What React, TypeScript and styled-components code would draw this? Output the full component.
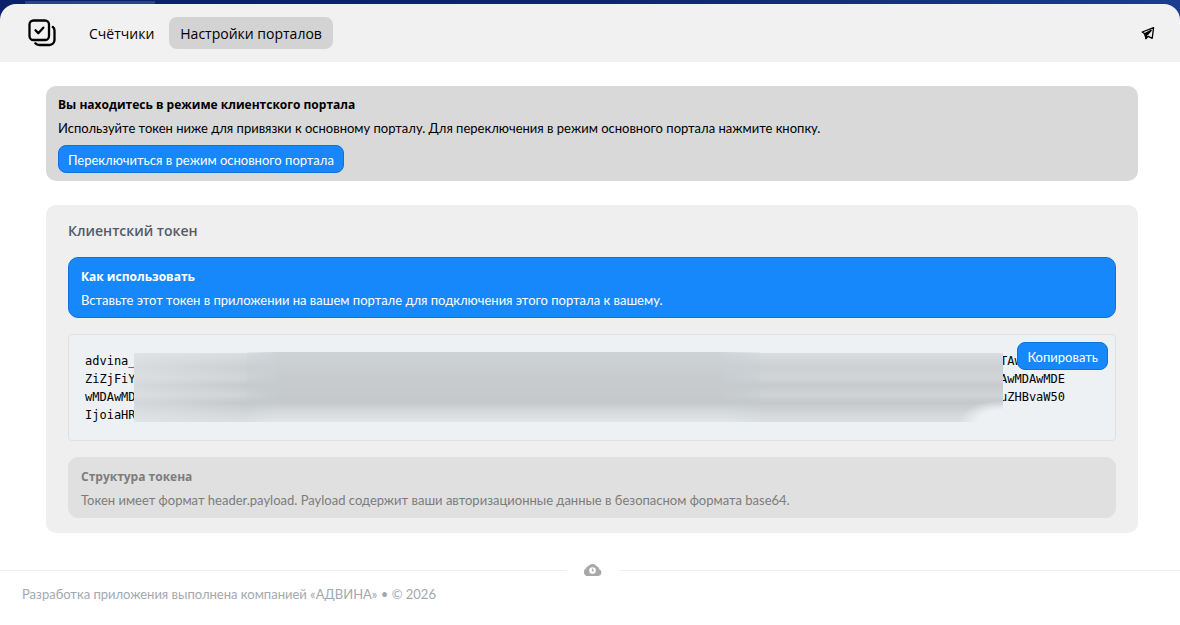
import React from "react";
import styled, { createGlobalStyle } from "styled-components";

const GlobalStyle = createGlobalStyle`
  * { box-sizing: border-box; }
  body {
    margin: 0;
    background: #fff;
    color: #000;
    font: 13px/20px Lato, "Open Sans", sans-serif;
  }
  h1, h2, p { margin: 0; font-size: inherit; }
`;

const TopStrip = styled.div`
  background:
    linear-gradient(#2c4385, #2c4385) 25px 1px / 130px 3px no-repeat,
    linear-gradient(90deg, #0b1f6c, #0d2470 50%, #1b3c8f);
  padding-top: 4px;
`;

const Header = styled.header`
  display: flex;
  align-items: center;
  height: 58px;
  padding: 0 25px 0 28px;
  border-radius: 16px 16px 0 0;
  background: #f1f1f1;
`;

const Nav = styled.nav`
  display: flex;
  gap: 4px;
  margin-left: 22px;
`;

const NavLink = styled.a<{ $active?: boolean }>`
  padding: 7px 11px 5px;
  border-radius: 8px;
  background: ${(p) => (p.$active ? "#d3d3d3" : "transparent")};
  color: #000;
  font-family: "Open Sans", sans-serif;
  font-size: 14px;
  line-height: 20px;
  text-decoration: none;
`;

const IconLink = styled.a`
  display: flex;
  margin-left: auto;
  color: #000;
`;

const Main = styled.main`
  display: flex;
  flex-direction: column;
  gap: 24px;
  padding: 24px 42px 0 46px;
`;

const Notice = styled.section`
  display: flex;
  flex-direction: column;
  align-items: flex-start;
  padding: 8px 12px;
  border-radius: 10px;
  background: #d9d9d9;
`;

const Heading = styled.h2`
  margin-bottom: 2px;
  font: 700 12px/22px "Open Sans", sans-serif;
`;

const Button = styled.button`
  height: 28px;
  padding: 2px 9px 0;
  border: 1px solid #1470d6;
  border-radius: 8px;
  background: #1787fc;
  color: #fff;
  font: 13px/20px Lato, "Open Sans", sans-serif;
  cursor: pointer;
`;

const SwitchButton = styled(Button)`
  margin-top: 7px;
`;

const Card = styled.section`
  display: flex;
  flex-direction: column;
  gap: 16px;
  padding: 16px 22px 15px;
  border-radius: 10px;
  background: #efefef;
`;

const CardTitle = styled.h1`
  color: #525c69;
  font: 600 14px/20px "Open Sans", sans-serif;
`;

const Alert = styled.div<{ $primary?: boolean }>`
  padding: 8px 12px 7px;
  border: 1px solid ${(p) => (p.$primary ? "#1470d6" : "#e0e0e0")};
  border-radius: 10px;
  background: ${(p) => (p.$primary ? "#1787fc" : "#e0e0e0")};
  color: ${(p) => (p.$primary ? "#fff" : "#7c7c7c")};
`;

const TokenBox = styled.div`
  position: relative;
  padding: 17px 50px 16px 16px;
  border: 1px solid #dfe0e3;
  border-radius: 4px;
  background: #edf1f4;
  font: 12px/18px "DejaVu Sans Mono", monospace;
`;

const TokenRow = styled.div`
  display: flex;
  justify-content: space-between;
`;

const TokenPart = styled.code<{ $end?: boolean }>`
  flex: none;
  width: ${(p) => (p.$end ? "65px" : "51px")};
  font: inherit;
`;

const Redaction = styled.div`
  position: absolute;
  top: 18px;
  bottom: 18px;
  left: 65px;
  right: 112px;
  background: linear-gradient(#dadee1, #ccd0d2 20%, #d1d5d8 36%, #c6cacc 47%, #d0d4d7 61%, #c4c8ca 72%, #d3d7d9 88%, #dadee0);
`;

const DenseSmudge = styled.span`
  position: absolute;
  inset: -1px 28% 0 13%;
  background: linear-gradient(#ced3d6, #c8cccf 35%, #c5c9cb 72%, #d3d7d9 83%, #e2e6e8);
  mask-image: linear-gradient(90deg, #0004, #000 6%, #000 92%, #0004);
`;

const EdgeFade = styled.span`
  position: absolute;
  inset: 0 auto 0 0;
  width: 115px;
  background: linear-gradient(90deg, #e4e8eb80, #e4e8eb00);
`;

const CornerFade = styled.span`
  position: absolute;
  right: 0;
  bottom: 0;
  width: 44px;
  height: 22px;
  background: radial-gradient(farthest-side at bottom right, #edf1f4 55%, #edf1f400);
`;

const CopyButton = styled(Button)`
  position: absolute;
  top: 7px;
  right: 7px;
`;

const Divider = styled.div`
  display: flex;
  align-items: center;
  gap: 17px;
  margin-top: 30px;
  color: #a8a8a8;
  &::before, &::after {
    content: "";
    height: 1px;
    background: #eeeeee;
  }
  &::before { flex: 567; }
  &::after { flex: 561; }
`;

const FooterText = styled.p`
  padding: 7px 22px 20px;
  color: #a3a8af;
`;

const rows = [
  ["advina_", "TAw"],
  ["ZiZjFiY", "AwMDAwMDE"],
  ["wMDAwMD", "uZHBvaW50"],
  ["IjoiaHR", ""],
];

const LogoIcon = () => (
  <svg width="28" height="28" viewBox="0 0 28 28" fill="none" stroke="#000" strokeWidth="2.300" strokeLinecap="round" strokeLinejoin="round" aria-hidden="true">
    <rect x="1.500" y="1.500" width="19.500" height="19.500" rx="4" />
    <path d="M7.500 11.300l2.800 2.900 5-5.500" />
    <path d="M24.800 8c1.200.8 1.700 2 1.700 3.500V21a5 5 0 0 1-5 5H11.500c-1.900 0-3.300-.5-4.200-1.700" />
  </svg>
);

const PlaneIcon = () => (
  <svg width="14" height="14" viewBox="0 0 14 14" fill="none" stroke="currentColor" strokeWidth="1.300" strokeLinejoin="round" aria-hidden="true">
    <path d="M12.600 1.700L1.200 6l2.700 1.900L5 12.500l2.200-2.200 4 2z" />
    <path d="M10.500 4L3.900 7.900M10.500 4L6.200 9.200" />
    <path d="M3.900 7.900l3-1.500-1.400 2.400L5 12.500z" fill="currentColor" />
  </svg>
);

const CloudIcon = () => (
  <svg width="18" height="14" viewBox="0 0 18 14" aria-hidden="true">
    <path d="M4.200 13A4 4 0 0 1 2 5.500 3.200 3.200 0 0 1 4.500 3 4.900 4.900 0 0 1 12.600 3.300 3.300 3.300 0 0 1 15.300 6.300 3.500 3.500 0 0 1 14.300 13z" fill="currentColor" />
    <circle cx="8.500" cy="7.600" r="3.300" fill="#fff" />
    <path d="M8.400 5.600v2.200h1.700" fill="none" stroke="currentColor" strokeWidth="1.100" />
  </svg>
);

export default function App() {
  return (
    <>
      <GlobalStyle />
      <TopStrip>
        <Header>
          <LogoIcon />
          <Nav>
            <NavLink href="#counters">Счётчики</NavLink>
            <NavLink href="#portals" $active aria-current="page">Настройки порталов</NavLink>
          </Nav>
          <IconLink href="#telegram" aria-label="Telegram"><PlaneIcon /></IconLink>
        </Header>
      </TopStrip>
      <Main>
        <Notice>
          <Heading>Вы находитесь в режиме клиентского портала</Heading>
          <p>Используйте токен ниже для привязки к основному порталу. Для переключения в режим основного портала нажмите кнопку.</p>
          <SwitchButton type="button">Переключиться в режим основного портала</SwitchButton>
        </Notice>
        <Card>
          <CardTitle>Клиентский токен</CardTitle>
          <Alert $primary>
            <Heading>Как использовать</Heading>
            <p>Вставьте этот токен в приложении на вашем портале для подключения этого портала к вашему.</p>
          </Alert>
          <TokenBox>
            {rows.map(([start, end]) => (
              <TokenRow key={start}>
                <TokenPart>{start}</TokenPart>
                <TokenPart $end>{end}</TokenPart>
              </TokenRow>
            ))}
            <Redaction>
              <EdgeFade />
              <DenseSmudge />
              <CornerFade />
            </Redaction>
            <CopyButton type="button">Копировать</CopyButton>
          </TokenBox>
          <Alert>
            <Heading>Структура токена</Heading>
            <p>Токен имеет формат header.payload. Payload содержит ваши авторизационные данные в безопасном формата base64.</p>
          </Alert>
        </Card>
      </Main>
      <footer>
        <Divider><CloudIcon /></Divider>
        <FooterText>Разработка приложения выполнена компанией «АДВИНА» • © 2026</FooterText>
      </footer>
    </>
  );
}
